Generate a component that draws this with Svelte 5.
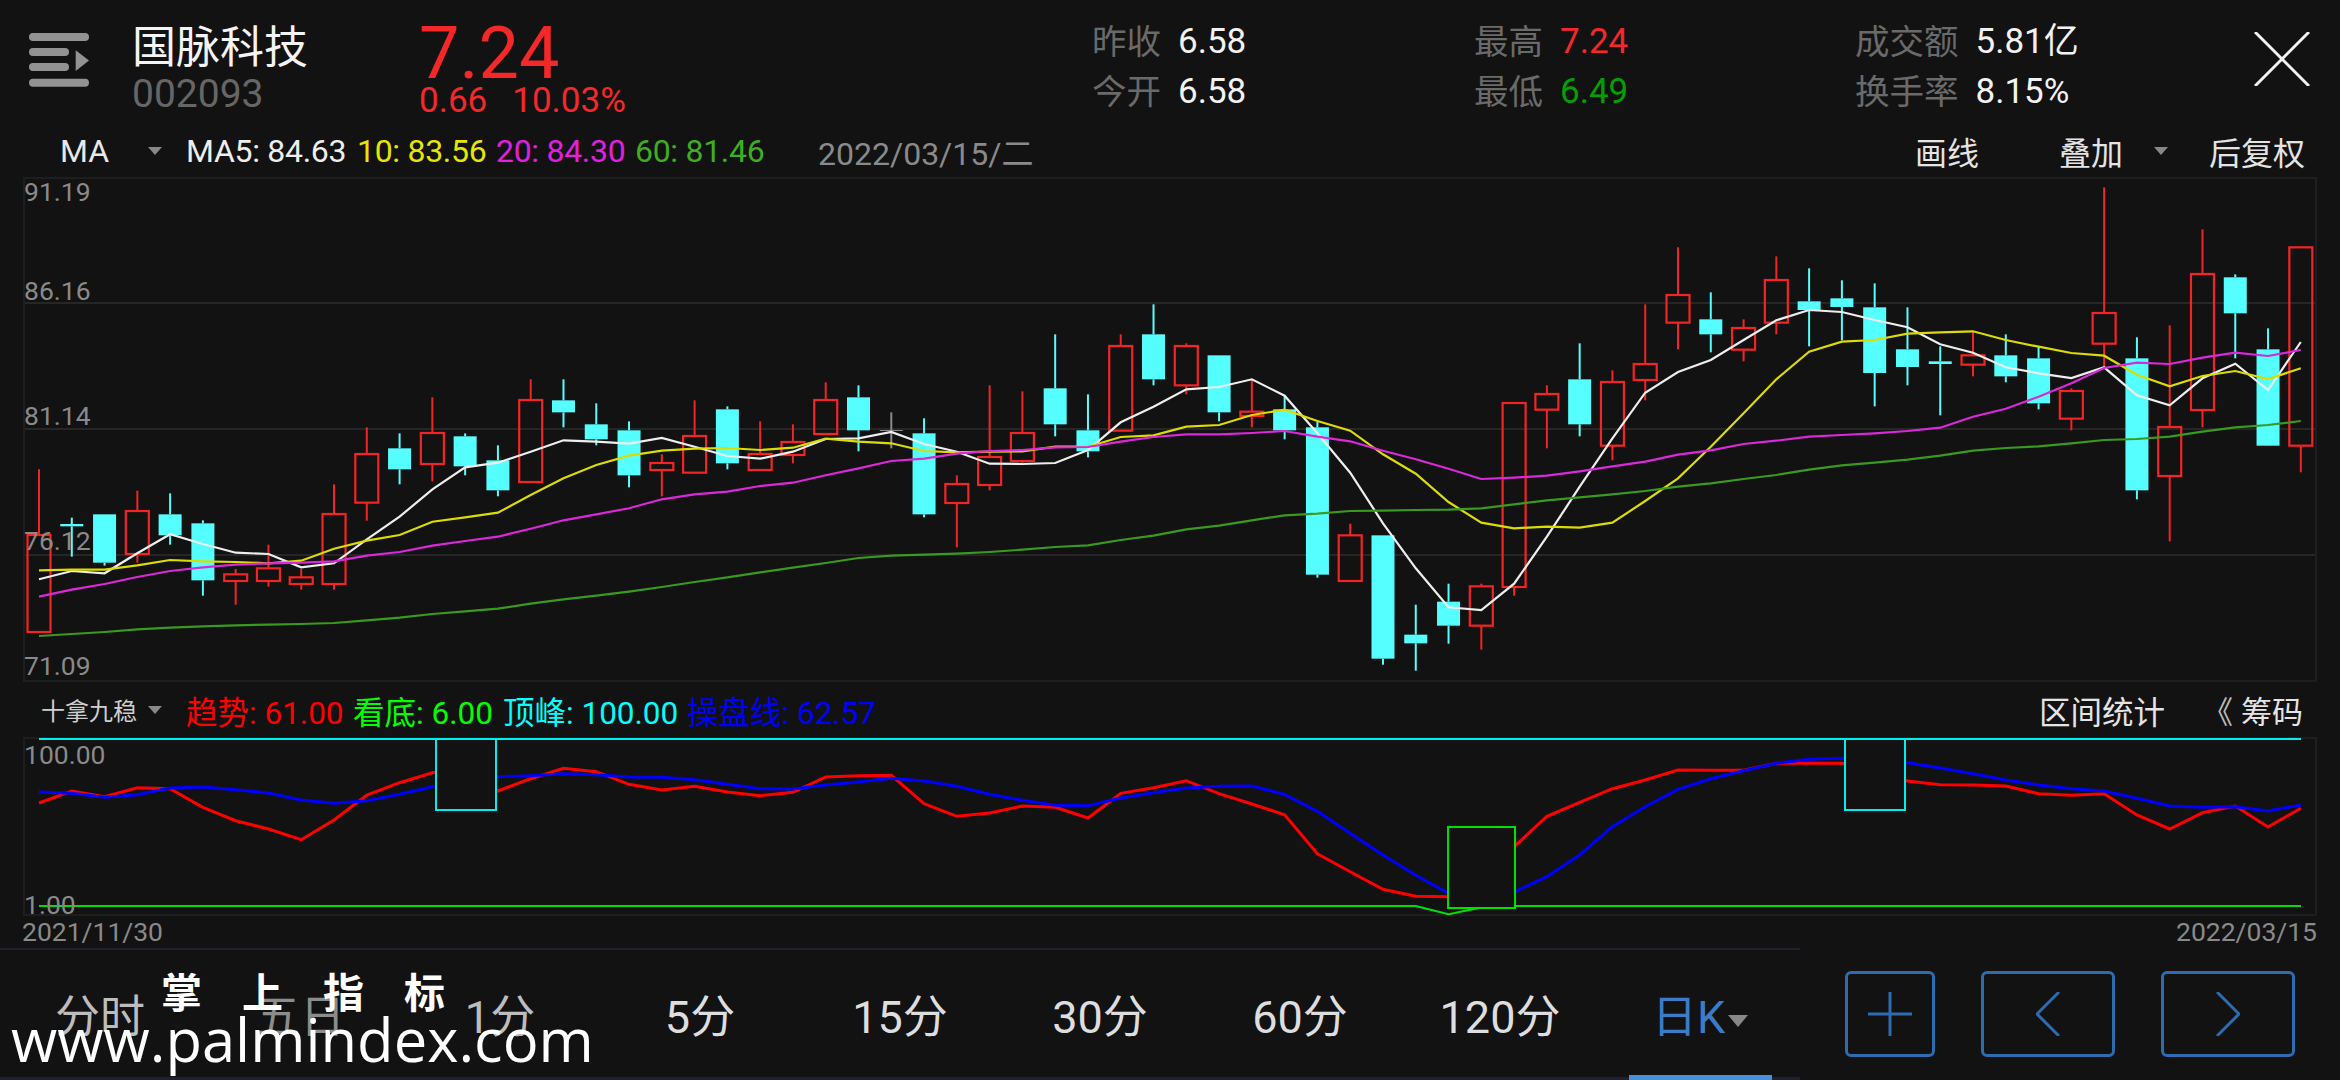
<script>
  // source values were read off the reference: y is 3x, measured from the top of each panel
  const CX = i => 39 + 32.78 * i;
  const MAIN_Y = v => 170 + v / 3;
  const SUB_Y = v => 680 + v / 3;

  // type, wick top, body top, body bottom, wick bottom
  const candles = [
    ["r", 898, 1095, 1386, 1386], ["c", 1043, 1062, 1069, 1160], ["c", 1033, 1033, 1178, 1187],
    ["r", 962, 1023, 1152, 1178], ["c", 970, 1033, 1096, 1124], ["c", 1051, 1060, 1231, 1277],
    ["r", 1197, 1213, 1233, 1304], ["r", 1124, 1195, 1233, 1250], ["r", 1197, 1222, 1242, 1259],
    ["r", 943, 1032, 1242, 1259], ["r", 772, 852, 998, 1052], ["c", 790, 835, 898, 943],
    ["r", 682, 789, 882, 934], ["c", 790, 799, 889, 916], ["c", 826, 871, 961, 979],
    ["r", 628, 690, 936, 936], ["c", 628, 691, 727, 772], ["c", 700, 763, 808, 826],
    ["c", 754, 781, 916, 952], ["r", 853, 879, 900, 979], ["r", 691, 798, 908, 908],
    ["c", 709, 718, 880, 898], ["r", 754, 852, 900, 900], ["r", 763, 816, 855, 880],
    ["r", 637, 690, 792, 792], ["c", 646, 682, 781, 844], ["g", 727, 780, 783, 835],
    ["c", 745, 790, 1033, 1042], ["r", 916, 942, 999, 1132], ["r", 646, 861, 945, 961],
    ["r", 664, 789, 873, 882], ["c", 493, 655, 763, 799], ["c", 673, 781, 844, 862],
    ["r", 493, 528, 782, 782], ["c", 403, 493, 628, 646], ["r", 520, 528, 646, 673],
    ["c", 556, 556, 727, 754], ["r", 628, 725, 738, 772], ["c", 675, 718, 781, 808],
    ["c", 754, 772, 1214, 1223], ["r", 1061, 1096, 1233, 1233], ["c", 1096, 1096, 1466, 1484],
    ["c", 1304, 1394, 1420, 1502], ["c", 1241, 1295, 1367, 1421], ["r", 1241, 1249, 1367, 1439],
    ["r", 699, 699, 1251, 1277], ["r", 646, 672, 719, 835], ["c", 520, 628, 763, 799],
    ["r", 601, 636, 827, 871], ["r", 403, 582, 630, 691], ["r", 232, 375, 458, 538],
    ["c", 367, 448, 493, 547], ["r", 448, 474, 539, 574], ["r", 259, 330, 458, 493],
    ["c", 295, 394, 420, 529], ["c", 331, 385, 411, 511], ["c", 340, 412, 609, 709],
    ["c", 412, 538, 591, 646], ["c", 529, 574, 582, 736], ["r", 484, 556, 584, 619],
    ["c", 493, 556, 619, 637], ["c", 529, 565, 700, 718], ["r", 655, 663, 746, 781],
    ["r", 52, 429, 521, 592], ["c", 502, 565, 961, 988], ["r", 466, 771, 918, 1114],
    ["r", 178, 312, 720, 772], ["c", 313, 322, 430, 565], ["c", 475, 538, 827, 827],
    ["r", 232, 232, 827, 907]
  ];

  const ma5 = [1228, 1203, 1210, 1150, 1093, 1122, 1148, 1152, 1192, 1180, 1108, 1040, 958, 892, 878, 845, 811, 815,
    821, 804, 830, 858, 866, 845, 807, 805, 786, 822, 845, 881, 882, 879, 840, 757, 710, 658,
    651, 628, 677, 790, 908, 1060, 1195, 1312, 1320, 1241, 1100, 950, 805, 668, 606, 570, 510, 451,
    420, 426, 450, 472, 523, 548, 592, 610, 624, 592, 676, 706, 625, 581, 660, 516];
  const ma10 = [1201, 1199, 1199, 1186, 1170, 1174, 1176, 1180, 1172, 1136, 1112, 1095, 1055, 1042, 1028, 975, 925, 885,
    857, 842, 836, 834, 840, 833, 806, 815, 820, 843, 847, 845, 844, 830, 830, 801, 796, 770,
    765, 735, 719, 753, 782, 853, 911, 996, 1058, 1075, 1070, 1073, 1058, 993, 925, 830, 730, 628,
    545, 515, 510, 491, 487, 484, 510, 530, 549, 557, 614, 649, 618, 603, 627, 595];
  const ma20 = [1280, 1259, 1242, 1221, 1203, 1192, 1184, 1180, 1178, 1174, 1157, 1146, 1127, 1113, 1100, 1076, 1051, 1033,
    1015, 988, 973, 965, 948, 938, 916, 895, 873, 866, 851, 843, 840, 832, 831, 815, 801, 793,
    793, 789, 783, 800, 814, 842, 868, 896, 927, 923, 917, 904, 889, 875, 854, 841, 822, 812,
    800, 795, 790, 783, 773, 740, 716, 680, 640, 594, 578, 582, 563, 548, 558, 540];
  const ma60 = [1398, 1392, 1386, 1378, 1373, 1369, 1366, 1364, 1362, 1359, 1351, 1343, 1332, 1324, 1316, 1301, 1288, 1277,
    1265, 1251, 1236, 1222, 1207, 1193, 1179, 1164, 1157, 1154, 1151, 1146, 1139, 1131, 1126, 1110, 1097, 1078,
    1067, 1051, 1036, 1031, 1023, 1022, 1020, 1019, 1015, 1003, 991, 982, 973, 963, 950, 940, 927, 915,
    899, 886, 878, 869, 857, 842, 834, 829, 820, 810, 807, 800, 785, 772, 765, 753];

  const trend = [369, 333, 350, 323, 326, 382, 422, 447, 479, 420, 345, 308, 278, 268, 333, 296, 265, 275, 313, 330, 319, 336, 347, 337, 291, 287, 286,
    371, 409, 399, 378, 382, 414, 340, 323, 302, 341, 372, 404, 521, 575, 628, 649, 650, 560, 500, 409, 367, 326,
    300, 270, 271, 271, 250, 250, 250, 270, 303, 314, 315, 318, 341, 346, 341, 405, 447, 398, 378, 441, 385];
  const oper = [336, 340, 352, 344, 324, 321, 329, 339, 360, 370, 362, 343, 320, 300, 290, 287, 281, 284, 291, 292, 299, 313, 326, 327, 315, 306, 295,
    303, 319, 343, 361, 376, 377, 354, 338, 324, 319, 318, 343, 394, 460, 525, 586, 640, 660, 636, 590, 525, 440,
    380, 328, 296, 272, 250, 238, 235, 240, 248, 264, 281, 300, 315, 326, 333, 355, 378, 382, 380, 393, 375];

  const pts = (list, toY) => list.map((v, i) => `${CX(i).toFixed(1)},${toY(v).toFixed(1)}`).join(" ");

  const maLines = [
    { data: ma5, color: "#eeeeee" },
    { data: ma10, color: "#dcdc00" },
    { data: ma20, color: "#dc28dc" },
    { data: ma60, color: "#3a9a1e" }
  ];

  const candleColor = { r: "#f42424", c: "#55ffff", g: "#8a8a8a" };

  const gridY = [303, 429, 555];
  const priceLabels = [
    { text: "91.19", top: 175 },
    { text: "86.16", top: 274 },
    { text: "81.14", top: 399 },
    { text: "76.12", top: 524 },
    { text: "71.09", top: 649 }
  ];

  const legend = [
    { text: "MA5: 84.63", color: "#eeeeee", width: 171 },
    { text: "10: 83.56", color: "#e6e600", width: 139 },
    { text: "20: 84.30", color: "#e020e0", width: 139 },
    { text: "60: 81.46", color: "#3fae1e", width: 183 }
  ];

  const signals = [
    { text: "趋势: 61.00", color: "#ff0000", width: 167 },
    { text: "看底: 6.00", color: "#00ff00", width: 150 },
    { text: "顶峰: 100.00", color: "#00ffff", width: 184 },
    { text: "操盘线: 62.57", color: "#0000ff", width: 190 }
  ];

  const greenPts = `39,906 ${CX(42).toFixed(1)},906 ${CX(43).toFixed(1)},914.3 ${CX(44).toFixed(1)},907.5 1516,906 2301,906`;

  const stats = [
    { width: 382, rows: [["昨收", "6.58", ""], ["今开", "6.58", ""]] },
    { width: 381, rows: [["最高", "7.24", "up"], ["最低", "6.49", "down"]] },
    { width: 399, rows: [["成交额", "5.81亿", ""], ["换手率", "8.15%", ""]] }
  ];

  const tabs = [
    { text: "分时", tone: "faint" },
    { text: "五日", tone: "dim" },
    { text: "1分", tone: "faint" },
    { text: "5分", tone: "" },
    { text: "15分", tone: "" },
    { text: "30分", tone: "" },
    { text: "60分", tone: "" },
    { text: "120分", tone: "" }
  ];
</script>

<div class="page">
  <header class="top">
    <svg class="menu" viewBox="0 0 60 54" width="60" height="54">
      <rect x="0" y="0" width="60" height="8" rx="4" />
      <rect x="0" y="15" width="40" height="8" rx="4" />
      <rect x="0" y="30" width="40" height="8" rx="4" />
      <rect x="0" y="45.7" width="60" height="8" rx="4" />
      <polygon points="46.7,17.3 60,27.6 46.7,38" />
    </svg>
    <div class="name">
      <div class="title">国脉科技</div>
      <div class="code">002093</div>
    </div>
    <div class="price">
      <div class="last">7.24</div>
      <div class="change"><span>0.66</span><span>10.03%</span></div>
    </div>
    {#each stats as group}
      <div class="stat" style="width: {group.width}px">
        {#each group.rows as row}
          <div class="stat-row">
            <span class="label">{row[0]}</span>
            <span class="value {row[2]}">{row[1]}</span>
          </div>
        {/each}
      </div>
    {/each}
    <svg class="close" viewBox="0 0 56 54" width="56" height="54">
      <path d="M1 0 L55 54 M55 0 L1 54" />
    </svg>
  </header>

  <div class="ma-row">
    <span class="ma-name">MA</span>
    <i class="tri"></i>
    {#each legend as item}
      <span class="ma-item" style="color: {item.color}; width: {item.width}px">{item.text}</span>
    {/each}
    <span class="date">2022/03/15/二</span>
    <span class="tool draw">画线</span>
    <span class="tool">叠加</span>
    <i class="tri after"></i>
    <span class="tool">后复权</span>
  </div>

  <div class="panel main">
    <svg viewBox="25 179 2290 501" width="2290" height="501">
      {#each gridY as y}
        <line x1="25" x2="2315" y1={y} y2={y} stroke="#262626" stroke-width="2" />
      {/each}
      {#each candles as [type, hi, open, close, lo], i}
        {@const x = CX(i)}
        {@const color = candleColor[type]}
        <line x1={x} x2={x} y1={MAIN_Y(hi)} y2={MAIN_Y(open)} stroke={color} stroke-width="2" />
        <line x1={x} x2={x} y1={MAIN_Y(close)} y2={MAIN_Y(lo)} stroke={color} stroke-width="2" />
        {#if type === "r"}
          <rect x={x - 11.5} y={MAIN_Y(open)} width="23" height={(close - open) / 3} fill="none" stroke={color} stroke-width="2.2" />
        {:else}
          <rect x={x - 11.5} y={MAIN_Y(open)} width="23" height={(close - open) / 3} fill={color} />
        {/if}
      {/each}
      {#each maLines as line}
        <polyline points={pts(line.data, MAIN_Y)} fill="none" stroke={line.color} stroke-width="2.2" />
      {/each}
    </svg>
    {#each priceLabels as label}
      <span class="axis" style="top: {label.top - 177}px">{label.text}</span>
    {/each}
  </div>

  <div class="sub-row">
    <span class="sub-name">十拿九稳</span>
    <i class="tri small"></i>
    {#each signals as item}
      <span class="signal" style="color: {item.color}; width: {item.width}px">{item.text}</span>
    {/each}
    <span class="tool range">区间统计</span>
    <span class="chips"><span class="arrows">《</span>筹码</span>
  </div>

  <div class="panel sub">
    <svg viewBox="25 739 2290 175" width="2290" height="175">
      <polyline points={pts(trend, SUB_Y)} fill="none" stroke="#ff0000" stroke-width="3" />
      <polyline points={pts(oper, SUB_Y)} fill="none" stroke="#0000ff" stroke-width="3" />
      <line x1="39" x2="2301" y1="739" y2="739" stroke="#00eeee" stroke-width="2" />
      <polyline points={greenPts} fill="none" stroke="#00e000" stroke-width="2" />
      <rect x="436" y="739" width="60" height="71" fill="#121212" stroke="#00eeee" stroke-width="2" />
      <rect x="1845" y="739" width="60" height="71" fill="#121212" stroke="#00eeee" stroke-width="2" />
      <rect x="1448" y="827" width="67" height="81" fill="#121212" stroke="#00e000" stroke-width="2" />
    </svg>
    <span class="axis" style="top: 1px">100.00</span>
    <span class="axis" style="top: 151px">1.00</span>
  </div>

  <div class="dates">
    <span>2021/11/30</span>
    <span>2022/03/15</span>
  </div>

  <div class="bottom">
    <nav class="tabs">
      {#each tabs as tab}
        <span class="tab {tab.tone}">{tab.text}</span>
      {/each}
      <span class="tab active">日K<i class="tri day"></i></span>
    </nav>
    <div class="buttons">
      <button class="btn plus" aria-label="add">
        <svg viewBox="0 0 44 44" width="44" height="44"><path d="M0 22 H44 M22 0 V44" /></svg>
      </button>
      <button class="btn" aria-label="previous">
        <svg viewBox="0 0 24 44" width="24" height="44"><path d="M23 0 L1 22 L23 44" /></svg>
      </button>
      <button class="btn" aria-label="next">
        <svg viewBox="0 0 24 44" width="24" height="44"><path d="M1 0 L23 22 L1 44" /></svg>
      </button>
    </div>
  </div>

  <div class="mark-title">掌上指标</div>
  <div class="mark-url">www.palmindex.com</div>
</div>

<style>
  :global(body) {
    margin: 0;
    background: #121212;
  }

  .page {
    position: relative;
    width: 2340px;
    height: 1080px;
    overflow: hidden;
    background: #121212;
    color: #e0e0e0;
    font-family: Roboto, "Noto Sans CJK SC", sans-serif;
  }

  .top {
    display: flex;
    height: 122px;
    box-sizing: border-box;
    padding-left: 29px;
  }

  .menu {
    margin-top: 33px;
    flex: none;
  }

  .menu rect,
  .menu polygon {
    fill: #929292;
  }

  .name {
    width: 287px;
    margin-left: 43px;
    flex: none;
  }

  .title {
    font-size: 44px;
    line-height: 50px;
    margin-top: 23px;
    color: #f4f4f4;
  }

  .code {
    font-size: 39px;
    line-height: 42px;
    color: #666;
  }

  .price {
    width: 673px;
    flex: none;
    color: #f42828;
  }

  .last {
    font-size: 72px;
    line-height: 72px;
    margin-top: 18px;
  }

  .change {
    display: flex;
    gap: 25px;
    font-size: 35px;
    line-height: 40px;
    margin-top: -9px;
  }

  .stat {
    flex: none;
    padding-top: 17px;
  }

  .stat-row {
    display: flex;
    gap: 17px;
    height: 50px;
    line-height: 50px;
    font-size: 35px;
    color: #f2f2f2;
  }

  .label {
    font-size: 34.5px;
    color: #6a6a6a;
  }

  .value.up {
    color: #f42828;
  }

  .value.down {
    color: #00a000;
  }

  .close {
    margin-top: 32px;
    flex: none;
  }

  .close path {
    stroke: #f2f2f2;
    stroke-width: 3;
    fill: none;
  }

  .ma-row {
    display: flex;
    align-items: center;
    height: 55px;
    padding-top: 2px;
    box-sizing: border-box;
    padding-left: 60px;
    font-size: 32px;
  }

  .ma-name {
    width: 88px;
    color: #e8e8e8;
  }

  .tri {
    width: 0;
    height: 0;
    border-left: 7px solid transparent;
    border-right: 7px solid transparent;
    border-top: 8px solid #888;
    margin-right: 24px;
    flex: none;
  }

  .ma-item {
    flex: none;
    white-space: nowrap;
    letter-spacing: -0.3px;
  }

  .date {
    width: 1097px;
    color: #8a8a8a;
    flex: none;
  }

  .tool {
    color: #e4e4e4;
    flex: none;
  }

  .draw {
    width: 144px;
  }

  .tri.after {
    margin: 0 41px 0 31px;
  }

  .panel {
    position: relative;
    margin: 0 23px;
    box-sizing: border-box;
    border: 2px solid #1e1e1e;
  }

  .panel svg {
    display: block;
    overflow: visible;
  }

  .main {
    height: 505px;
  }

  .sub {
    height: 179px;
  }

  .axis {
    position: absolute;
    left: -1px;
    font-size: 26.5px;
    line-height: 30px;
    color: #8a8a8a;
  }

  .sub-row {
    display: flex;
    align-items: center;
    height: 55px;
    padding: 0 37px 0 41px;
    font-size: 31.5px;
  }

  .sub-name {
    width: 107px;
    font-size: 24px;
    color: #cfcfcf;
  }

  .tri.small {
    margin-right: 24px;
  }

  .signal {
    flex: none;
    white-space: nowrap;
  }

  .range {
    margin: 0 37px 0 auto;
    font-size: 31.5px;
  }

  .chips {
    font-size: 31px;
    color: #e4e4e4;
    white-space: nowrap;
  }

  .arrows {
    font-size: 31px;
    margin-right: 8px;
    color: #bbb;
  }

  .dates {
    display: flex;
    justify-content: space-between;
    height: 32px;
    margin: 0 23px 0 22px;
    font-size: 26.5px;
    line-height: 32px;
    color: #8a8a8a;
  }

  .bottom {
    display: flex;
    height: 132px;
  }

  .tabs {
    display: flex;
    width: 1800px;
    box-sizing: border-box;
    border-top: 2px solid #20202e;
    border-bottom: 3px solid #20202e;
    flex: none;
  }

  .tab {
    position: relative;
    width: 200px;
    display: flex;
    align-items: center;
    justify-content: center;
    font-size: 45px;
    color: #dedede;
  }

  .tab.faint {
    color: #bdbdbd;
  }

  .tab.dim {
    color: #8c8c8c;
  }

  .tab.active {
    color: #3a7cc8;
  }

  .tab.active::after {
    content: "";
    position: absolute;
    left: 29px;
    right: 28px;
    bottom: -3px;
    height: 5px;
    background: #4a90d9;
  }

  .tri.day {
    border-left-width: 10px;
    border-right-width: 10px;
    border-top-width: 12px;
    margin: 14px 0 0 3px;
  }

  .buttons {
    display: flex;
    gap: 46px;
    padding: 23px 0 0 45px;
  }

  .btn {
    width: 134px;
    height: 86px;
    box-sizing: border-box;
    display: flex;
    align-items: center;
    justify-content: center;
    padding: 0;
    background: none;
    border: 3px solid #2d6cb0;
    border-radius: 6px;
  }

  .btn.plus {
    width: 90px;
  }

  .btn path {
    fill: none;
    stroke: #2d6cb0;
    stroke-width: 3;
  }

  .mark-title {
    position: absolute;
    left: 161px;
    top: 964px;
    font-size: 41px;
    line-height: 60px;
    font-weight: 700;
    letter-spacing: 40px;
    color: #fff;
  }

  .mark-url {
    position: absolute;
    left: 11px;
    top: 1001px;
    font-family: "Open Sans", sans-serif;
    font-size: 59.7px;
    line-height: 76px;
    color: #fff;
    white-space: nowrap;
  }
</style>
